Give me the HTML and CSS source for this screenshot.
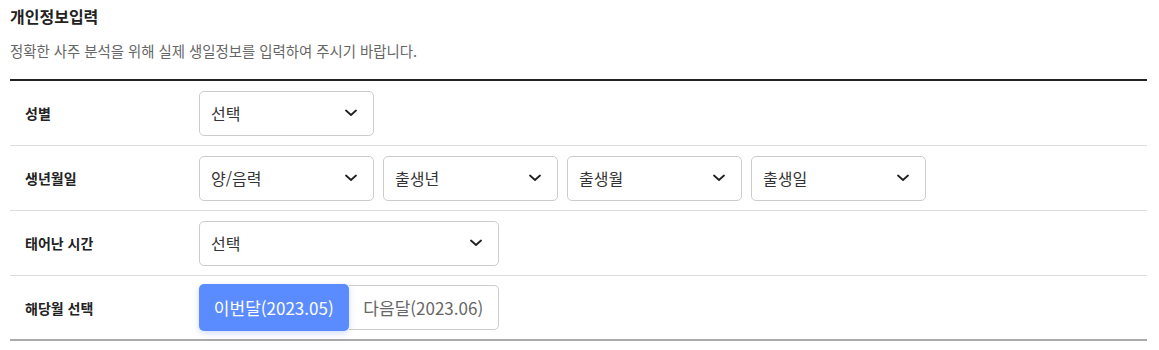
FILE: index.html
```html
<!DOCTYPE html>
<html lang="ko">
<head>
<meta charset="utf-8">
<link rel="stylesheet" href="styles.css">
</head>
<body>
<div class="wrap">
  <h2 class="title">개인정보입력</h2>
  <p class="desc">정확한 사주 분석을 위해 실제 생일정보를 입력하여 주시기 바랍니다.</p>
  <div class="form">
    <div class="row">
      <div class="label">성별</div>
      <div class="fields">
        <div class="select w175"><span>선택</span><svg class="chev" viewBox="0 0 12 8"><path d="M1 1.5 L6 6 L11 1.5" /></svg></div>
      </div>
    </div>
    <div class="row">
      <div class="label">생년월일</div>
      <div class="fields">
        <div class="select w175"><span>양/음력</span><svg class="chev" viewBox="0 0 12 8"><path d="M1 1.5 L6 6 L11 1.5" /></svg></div>
        <div class="select w175"><span>출생년</span><svg class="chev" viewBox="0 0 12 8"><path d="M1 1.5 L6 6 L11 1.5" /></svg></div>
        <div class="select w175"><span>출생월</span><svg class="chev" viewBox="0 0 12 8"><path d="M1 1.5 L6 6 L11 1.5" /></svg></div>
        <div class="select w175"><span>출생일</span><svg class="chev" viewBox="0 0 12 8"><path d="M1 1.5 L6 6 L11 1.5" /></svg></div>
      </div>
    </div>
    <div class="row">
      <div class="label">태어난 시간</div>
      <div class="fields">
        <div class="select w300"><span>선택</span><svg class="chev" viewBox="0 0 12 8"><path d="M1 1.5 L6 6 L11 1.5" /></svg></div>
      </div>
    </div>
    <div class="row last">
      <div class="label">해당월 선택</div>
      <div class="fields">
        <div class="toggle">
          <button class="tbtn active">이번달(2023.05)</button>
          <button class="tbtn">다음달(2023.06)</button>
        </div>
      </div>
    </div>
  </div>
</div>
</body>
</html>
```
FILE: styles.css
```css
* { box-sizing: border-box; }
body {
  margin: 0;
  background: #fff;
  font-family: "Noto Sans CJK KR", "Noto Sans", sans-serif;
  color: #222;
}
.wrap {
  width: 1137px;
  margin-left: 10px;
  padding-top: 5px;
}
.title {
  margin: 0;
  font-size: 16px;
  font-weight: 700;
  line-height: 22px;
  color: #222;
}
.desc {
  margin: 14px 0 0;
  font-size: 14.4px;
  line-height: 20px;
  color: #666;
}
.form {
  margin-top: 18px;
  border-top: 2px solid #222;
}
.row {
  display: flex;
  align-items: center;
  height: 65px;
  border-bottom: 1px solid #ddd;
}
.row.last {
  border-bottom: 2px solid #aaa;
}
.label {
  width: 189px;
  padding-left: 15px;
  font-size: 14px;
  font-weight: 700;
  color: #222;
}
.fields {
  display: flex;
  gap: 9px;
}
.select {
  height: 45px;
  border: 1px solid #ccc;
  border-radius: 5px;
  display: flex;
  align-items: center;
  justify-content: space-between;
  padding: 0 16px 0 11px;
  font-size: 16px;
  color: #333;
}
.w175 { width: 175px; }
.w300 { width: 300px; }
.chev {
  width: 12px;
  height: 8px;
  fill: none;
  stroke: #222;
  stroke-width: 1.8;
  stroke-linecap: round;
  stroke-linejoin: round;
}
.toggle {
  display: flex;
  width: 300px;
  height: 45px;
}
.tbtn {
  flex: 1;
  border: 1px solid #ccc;
  background: #fff;
  font-family: inherit;
  font-size: 17px;
  color: #666;
  padding: 0;
  border-radius: 0 5px 5px 0;
  border-left: none;
}
.tbtn.active {
  background: #5b8cff;
  color: #fff;
  border: none;
  border-radius: 5px;
  height: 47px;
  margin-top: -1px;
  box-shadow: 0 2px 6px rgba(91, 140, 255, 0.3);
  position: relative;
  z-index: 1;
}
```
